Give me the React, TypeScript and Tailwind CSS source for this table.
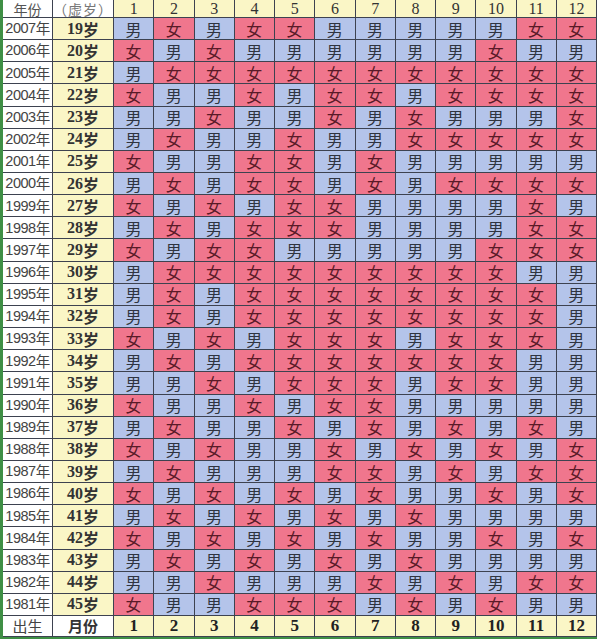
import React from 'react';

// M = 男, F = 女, months 1..12
const ROWS: [number, number, string][] = [
  [2007, 19, 'MFMFFMMMMMFF'],
  [2006, 20, 'FMFMMMMMMFMM'],
  [2005, 21, 'MFFFFFFFFFFF'],
  [2004, 22, 'FMMFMFFMFFFF'],
  [2003, 23, 'MMFMMFMFMMMF'],
  [2002, 24, 'MFMMFMMFFFFF'],
  [2001, 25, 'FMMFFMFMMMMM'],
  [2000, 26, 'MFMFFMFMFFFF'],
  [1999, 27, 'FMFMFFMMMMFM'],
  [1998, 28, 'MFMFFFMMMMFF'],
  [1997, 29, 'FMFFMMMMMFFF'],
  [1996, 30, 'MFFFFFFFFFMM'],
  [1995, 31, 'MFMFFFFFFFFM'],
  [1994, 32, 'MFMFFFFFFFFM'],
  [1993, 33, 'FMFMFFFMFFFM'],
  [1992, 34, 'MFMFFFFFFFMM'],
  [1991, 35, 'MMFMFFFMFFMM'],
  [1990, 36, 'FMMFMFFMMMMM'],
  [1989, 37, 'MFMMFMFMFMFM'],
  [1988, 38, 'FMFMMFMFMFMF'],
  [1987, 39, 'MFMMMFFMFMFF'],
  [1986, 40, 'FMFMFMFMMFMF'],
  [1985, 41, 'MFMFMFMFMMMM'],
  [1984, 42, 'FMFMFMFMMFMF'],
  [1983, 43, 'MFMFMFMFMMMM'],
  [1982, 44, 'MMFMMMFMFMFF'],
  [1981, 45, 'FMMFFFMFMFMM'],
];

const MONTHS = [1, 2, 3, 4, 5, 6, 7, 8, 9, 10, 11, 12];

const cjk = "font-['Noto_Sans_CJK_SC',sans-serif]";
const serif = "font-['Liberation_Serif','Noto_Sans_CJK_SC',serif]";
const cell = 'flex items-center justify-center border-r border-b border-[#3d4250] leading-none';

export default function App() {
  return (
    <div className="w-[597px] h-[639px] bg-white overflow-hidden">
      <div
        className="grid h-full border-l-[3px] border-b-2 border-[#3f8f45] bg-white"
        style={{ gridTemplateColumns: '50px 61px repeat(12, 1fr)', gridTemplateRows: '18px repeat(27, 1fr) 21px' }}
      >
        {/* header */}
        <div className={`${cell} ${cjk} text-[14px] text-[#555]`}>年份</div>
        <div className={`${cell} ${cjk} text-[14px] text-[#777] tracking-[1px]`}>（虚岁）</div>
        {MONTHS.map(m => (
          <div key={m} className={`${cell} ${serif} bg-[#faf6c6] text-[16px] text-[#333]`}>{m}</div>
        ))}

        {ROWS.map(([year, age, pattern]) => (
          <React.Fragment key={year}>
            <div className={`${cell} font-['Liberation_Sans','Noto_Sans_CJK_SC',sans-serif] text-[14.5px] text-[#444] tracking-[-0.5px]`}>
              {year}<span className={cjk}>年</span>
            </div>
            <div className={`${cell} ${serif} bg-[#faf6c6] text-[16px] font-bold text-[#333]`}>
              {age}<span className={`${cjk} font-bold`}>岁</span>
            </div>
            {pattern.split('').map((g, i) => (
              <div
                key={i}
                className={`${cell} ${cjk} text-[16px] ${g === 'M' ? 'bg-[#b4c4ea] text-[#2f3440]' : 'bg-[#f0768d] text-[#5a1a28]'}`}
              >
                {g === 'M' ? '男' : '女'}
              </div>
            ))}
          </React.Fragment>
        ))}

        {/* footer */}
        <div className={`${cell} ${cjk} text-[15px] text-[#444]`}>出生</div>
        <div className={`${cell} ${cjk} text-[15px] font-bold text-[#333]`}>月份</div>
        {MONTHS.map(m => (
          <div key={m} className={`${cell} ${serif} bg-[#faf6c6] text-[17px] font-bold text-[#222]`}>{m}</div>
        ))}
      </div>
    </div>
  );
}
